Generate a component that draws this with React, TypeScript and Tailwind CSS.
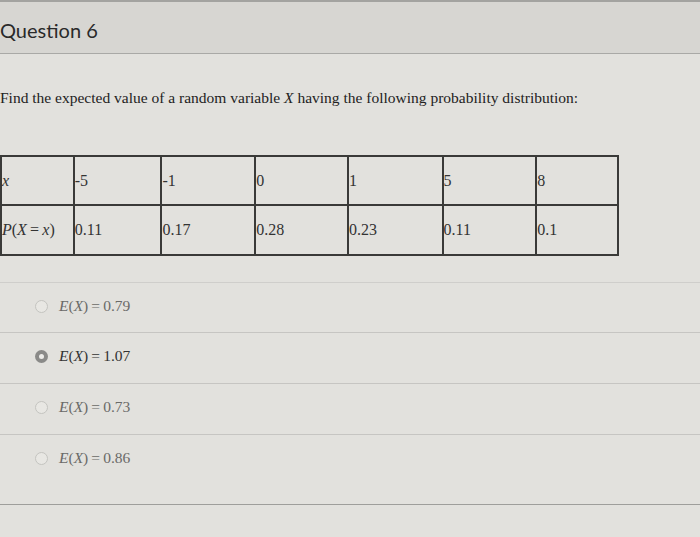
const xs = ["-5", "-1", "0", "1", "5", "8"];
const ps = ["0.11", "0.17", "0.28", "0.23", "0.11", "0.1"];
const widths = ["w-[88px]", "w-[94px]", "w-[93px]", "w-[95px]", "w-[94px]", "w-[82px]"];

const options = [
  { value: "0.79", selected: false, h: "h-[50px]" },
  { value: "1.07", selected: true, h: "h-[51px]" },
  { value: "0.73", selected: false, h: "h-[51px]" },
  { value: "0.86", selected: false, h: "h-[70px]" },
];

function Radio({ selected }: { selected: boolean }) {
  if (selected) {
    return (
      <span className="flex h-[13px] w-[13px] items-center justify-center rounded-full bg-[#8a8a88]">
        <span className="h-[5px] w-[5px] rounded-full bg-[#ecebe8]" />
      </span>
    );
  }
  return <span className="h-[13px] w-[13px] rounded-full border border-[#c4c4c0] bg-[#e8e7e3]" />;
}

export default function App() {
  return (
    <div className="min-h-[537px] w-[700px] overflow-hidden bg-[#e2e1dd] font-['Liberation_Serif',serif] text-[#222]">
      <div className="h-[54px] border-t-2 border-b border-t-[#a3a3a0] border-b-[#a9a9a6] bg-[#d7d6d2] pt-[15px]">
        <h2 className="font-['Lato',sans-serif] text-[20px] leading-[26px] text-[#2a2a2a]">Question 6</h2>
      </div>

      <p className="mt-[34px] text-[15.5px] leading-[20px]">
        Find the expected value of a random variable <i>X</i> having the following probability distribution:
      </p>

      <div className="mt-[47px] w-[619px] border-2 border-[#3a3a38] text-[16px] text-[#333]">
        <div className="flex h-[49px] border-b-2 border-[#3a3a38]">
          <div className="flex w-[71px] items-center italic">x</div>
          {xs.map((x, i) => (
            <div key={i} className={`flex items-center border-l-2 border-[#3a3a38] ${widths[i]}`}>
              {x}
            </div>
          ))}
        </div>
        <div className="flex h-[48px]">
          <div className="flex w-[71px] items-center whitespace-nowrap">
            <i>P</i>(<i>X</i>&thinsp;=&thinsp;<i>x</i>)
          </div>
          {ps.map((p, i) => (
            <div key={i} className={`flex items-center border-l-2 border-[#3a3a38] ${widths[i]}`}>
              {p}
            </div>
          ))}
        </div>
      </div>

      <div className="mt-[26px]">
        {options.map((o, i) => (
          <div
            key={i}
            className={`flex items-start gap-[11px] border-t pl-[35px] pt-[16px] ${o.h} ${
              i === 0 ? "border-[#cfcecb]" : "border-[#c6c5c2]"
            }`}
          >
            <div className="flex h-[14px] items-center pt-[1px]">
              <Radio selected={o.selected} />
            </div>
            <span className={`text-[15.5px] leading-[14px] ${o.selected ? "text-[#333]" : "text-[#6a6a68]"}`}>
              <i>E</i>(<i>X</i>)&thinsp;=&thinsp;{o.value}
            </span>
          </div>
        ))}
        <div className="border-t border-[#9e9e9b]" />
      </div>
    </div>
  );
}
